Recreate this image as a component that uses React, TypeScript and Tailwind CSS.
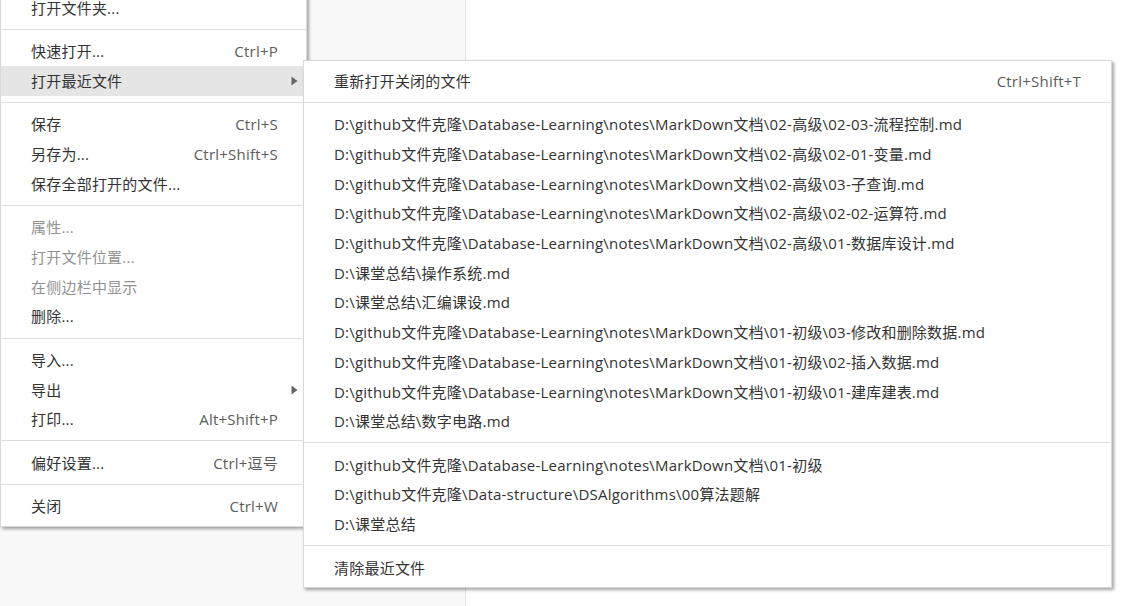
import React from "react";

type Item =
  | { sep: true }
  | { label: string; shortcut?: string; disabled?: boolean; sub?: boolean; active?: boolean };

const fileMenu: Item[] = [
  { label: "打开文件夹..." },
  { sep: true },
  { label: "快速打开...", shortcut: "Ctrl+P" },
  { label: "打开最近文件", sub: true, active: true },
  { sep: true },
  { label: "保存", shortcut: "Ctrl+S" },
  { label: "另存为...", shortcut: "Ctrl+Shift+S" },
  { label: "保存全部打开的文件..." },
  { sep: true },
  { label: "属性...", disabled: true },
  { label: "打开文件位置...", disabled: true },
  { label: "在侧边栏中显示", disabled: true },
  { label: "删除..." },
  { sep: true },
  { label: "导入..." },
  { label: "导出", sub: true },
  { label: "打印...", shortcut: "Alt+Shift+P" },
  { sep: true },
  { label: "偏好设置...", shortcut: "Ctrl+逗号" },
  { sep: true },
  { label: "关闭", shortcut: "Ctrl+W" },
];

const dbBase = "D:\\github文件克隆\\Database-Learning\\notes\\MarkDown文档\\";

const recentFiles = [
  dbBase + "02-高级\\02-03-流程控制.md",
  dbBase + "02-高级\\02-01-变量.md",
  dbBase + "02-高级\\03-子查询.md",
  dbBase + "02-高级\\02-02-运算符.md",
  dbBase + "02-高级\\01-数据库设计.md",
  "D:\\课堂总结\\操作系统.md",
  "D:\\课堂总结\\汇编课设.md",
  dbBase + "01-初级\\03-修改和删除数据.md",
  dbBase + "01-初级\\02-插入数据.md",
  dbBase + "01-初级\\01-建库建表.md",
  "D:\\课堂总结\\数字电路.md",
];

const recentFolders = [
  dbBase + "01-初级",
  "D:\\github文件克隆\\Data-structure\\DSAlgorithms\\00算法题解",
  "D:\\课堂总结",
];

const recentMenu: Item[] = [
  { label: "重新打开关闭的文件", shortcut: "Ctrl+Shift+T" },
  { sep: true },
  ...recentFiles.map((f) => ({ label: f })),
  { sep: true },
  ...recentFolders.map((f) => ({ label: f })),
  { sep: true },
  { label: "清除最近文件" },
];

function MenuRows({ items, padRight }: { items: Item[]; padRight: string }) {
  return (
    <>
      {items.map((item, i) => {
        if ("sep" in item) {
          return <div key={i} className="my-[6.4px] h-px bg-[#dedede]" />;
        }
        return (
          <div
            key={i}
            className={`relative flex h-[29.7px] items-center pl-[30px] ${padRight} ${
              item.active ? "bg-[#e5e5e5]" : ""
            } ${item.disabled ? "text-[#929292]" : "text-[#333]"}`}
          >
            <span className="whitespace-nowrap">{item.label}</span>
            {item.shortcut && (
              <span className="ml-auto whitespace-nowrap text-[#5c5c5c]">{item.shortcut}</span>
            )}
            {item.sub && (
              <svg
                className="absolute right-[8px] top-1/2 -translate-y-1/2"
                width="7"
                height="10"
                viewBox="0 0 7 10"
              >
                <path d="M0.5 0.5 L6.5 5 L0.5 9.5 Z" fill="#666" />
              </svg>
            )}
          </div>
        );
      })}
    </>
  );
}

export default function App() {
  return (
    <div
      className="relative h-[606px] w-full overflow-hidden text-[15px] leading-[20px] tracking-[0.22px]"
      style={{ fontFamily: '"Segoe UI", "Open Sans", "Noto Sans CJK SC", sans-serif' }}
    >
      <div className="flex h-full">
        <div className="h-full w-[466px] border-r border-[#e6e6e6] bg-[#f8f8f8]" />
        <div className="h-full flex-1 bg-white" />
      </div>

      {/* File menu */}
      <div className="absolute left-0 top-[-13px] w-[307px] border border-[#d9d9d9] bg-white pb-[5px] pt-[5px] shadow-[2px_2px_3px_rgba(0,0,0,0.35)]">
        <MenuRows items={fileMenu} padRight="pr-[28px]" />
      </div>

      {/* Open recent submenu */}
      <div className="absolute left-[303px] top-[60px] w-[809px] border border-[#d9d9d9] bg-white py-[5px] shadow-[2px_2px_3px_rgba(0,0,0,0.35)]">
        <MenuRows items={recentMenu} padRight="pr-[30px]" />
      </div>
    </div>
  );
}
